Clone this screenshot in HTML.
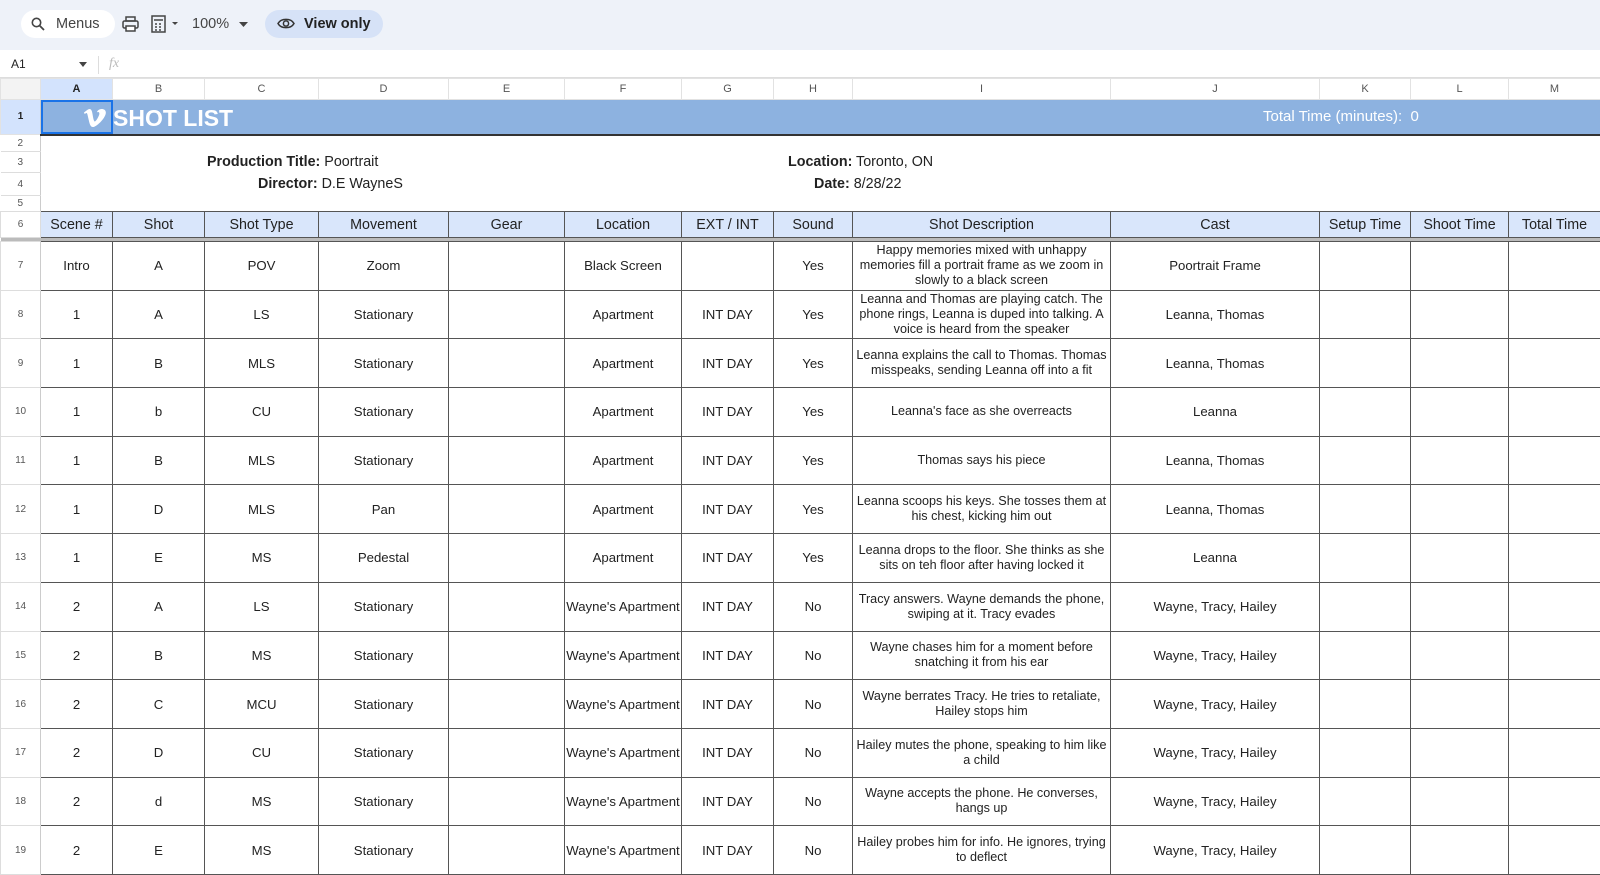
<!DOCTYPE html><html><head><meta charset="utf-8"><style>
body{margin:0;width:1600px;height:875px;overflow:hidden;background:#fff;font-family:"Liberation Sans",Arial,sans-serif;color:#222;position:relative}
.tb{position:absolute;left:0;top:0;width:1600px;height:50px;background:#eef2f9}
.pill{position:absolute;top:10px;height:28px;border-radius:14px;font-size:14.5px;line-height:28px;color:#444}
.fb{position:absolute;top:53px;left:0;width:1600px;height:24px;background:#fff;border-bottom:1px solid #ddd;font-size:12px}
table{position:absolute;left:0;top:78px;border-collapse:collapse;table-layout:fixed;width:1600px}
td{padding:0 1px;text-align:center;font-size:13.2px;overflow:hidden;white-space:nowrap;border:1px solid #e2e2e2}
tr.ch td{height:19.5px;font-size:11px;color:#555;background:#fff}
td.rh{font-size:10px;color:#555;background:#fff;border-right:1px solid #ccc}
tr.ch td:first-child{background:#f3f3f3}
tr.d td{height:47.7px;border:1px solid #555}
tr.d td.rh{border:1px solid #ddd;border-right:1px solid #ccc}
tr.d td.w{white-space:normal;line-height:15px;font-size:12.6px;padding:0 2px}
tr.h td{height:25px;background:#d9e6fb;border:1px solid #555;font-size:14.3px}
tr.h td.rh{background:#fff;border:1px solid #ddd;font-size:10px}
.blank td{border:none}
.blank td.rh{border-bottom:1px solid #ddd;border-right:1px solid #ccc}
b{font-weight:bold}
</style></head><body>
<div class="tb">
<div class="pill" style="left:21px;width:94px;background:#fff"><svg style="position:absolute;left:10px;top:7px" width="14" height="14" viewBox="0 0 14 14"><circle cx="5.5" cy="5.5" r="4.2" fill="none" stroke="#444" stroke-width="1.6"/><path d="M8.5 8.5L13 13" stroke="#444" stroke-width="1.8"/></svg><span style="position:absolute;left:35px">Menus</span></div>
<svg style="position:absolute;left:122px;top:16px" width="17" height="16" viewBox="0 0 17 16"><rect x="4" y="1" width="9" height="4" fill="none" stroke="#444" stroke-width="1.5"/><rect x="1" y="5" width="15" height="7" rx="1.5" fill="none" stroke="#444" stroke-width="1.5"/><rect x="4" y="10" width="9" height="5" fill="#fff" stroke="#444" stroke-width="1.5"/></svg>
<svg style="position:absolute;left:151px;top:15px" width="30" height="18" viewBox="0 0 30 18"><rect x="1" y="1" width="13" height="16" fill="none" stroke="#444" stroke-width="1.5"/><path d="M3 5h9M4 9h2M8 9h2M4 12h2M8 12h2M4 15h2M8 15h2" stroke="#444" stroke-width="1.5"/><path d="M21 7l3 3 3-3z" fill="#444"/></svg>
<span class="pill" style="left:192px">100%</span>
<svg style="position:absolute;left:239px;top:22px" width="9" height="5"><path d="M0 0h9L4.5 5z" fill="#444"/></svg>
<div class="pill" style="left:265px;width:118px;background:#d6e2f7;color:#222;font-weight:bold"><svg style="position:absolute;left:12px;top:7px" width="18" height="13" viewBox="0 0 18 13"><path d="M1 6.5C4 1 14 1 17 6.5 14 12 4 12 1 6.5z" fill="none" stroke="#333" stroke-width="1.5"/><circle cx="9" cy="6.5" r="2.6" fill="none" stroke="#333" stroke-width="1.5"/></svg><span style="position:absolute;left:39px">View only</span></div>
</div>
<div class="fb"><span style="position:absolute;left:11px;top:4px">A1</span><svg style="position:absolute;left:79px;top:9px" width="8" height="5"><path d="M0 0h8L4 5z" fill="#444"/></svg><span style="position:absolute;left:98px;top:3px;height:18px;border-left:1px solid #ddd"></span><span style="position:absolute;left:109px;top:3px;font-style:italic;color:#bbb;font-family:'Liberation Serif',serif;font-size:14px">fx</span></div>
<table>
<colgroup><col style="width:40px"><col style="width:72px"><col style="width:92px"><col style="width:114px"><col style="width:130px"><col style="width:116px"><col style="width:117px"><col style="width:92px"><col style="width:79px"><col style="width:258px"><col style="width:209px"><col style="width:91px"><col style="width:98px"><col style="width:92px"></colgroup>
<tr class="ch"><td></td><td style="background:#d3e3fd;font-weight:bold;color:#222">A</td><td>B</td><td>C</td><td>D</td><td>E</td><td>F</td><td>G</td><td>H</td><td>I</td><td>J</td><td>K</td><td>L</td><td>M</td></tr>
<tr><td class="rh" style="height:34px;background:#d3e3fd;font-weight:bold;color:#222">1</td><td colspan="13" style="background:#8db2e0;border:none;border-bottom:2px solid #333;text-align:left;padding:0;position:relative;height:34px"><div style="position:absolute;left:0;top:0;width:72px;height:34px;border:2px solid #1a73e8;box-sizing:border-box"></div><svg style="position:absolute;left:42px;top:8px" width="24" height="20" viewBox="0 0 24 20"><path d="M1 4.5C3 3 5 1 6.5 1 8.5 1 9 3 9.6 6.5 10.3 11 11 13.5 11.8 13.5 13 13.5 16 8 16.3 6.2 16.6 4 15.5 3.5 14 4.3 14.8 0 23.5-0.5 22.8 5.2 22 11 13 19 10 19 7 19 6.5 15 5.5 11 4.6 7 4.3 5 3.5 5 3 5 2.2 5.7 1.7 6z" fill="#fff"/></svg><span style="position:absolute;left:72px;top:5px;font-size:23px;font-weight:bold;color:#fff">SHOT LIST</span><span style="position:absolute;left:1222px;top:8px;font-size:15px;color:#fff">Total Time (minutes):&nbsp; 0</span></td></tr>
<tr class="blank"><td class="rh" style="height:16px">2</td><td colspan="13"></td></tr>
<tr class="blank"><td class="rh" style="height:20px">3</td><td colspan="13" style="position:relative;text-align:left;font-size:14.3px"><span style="position:absolute;left:166px;top:2px"><b>Production Title:</b> Poortrait</span><span style="position:absolute;left:747px;top:2px"><b>Location:</b> Toronto, ON</span></td></tr>
<tr class="blank"><td class="rh" style="height:22px">4</td><td colspan="13" style="position:relative;text-align:left;font-size:14.3px"><span style="position:absolute;left:217px;top:3px"><b>Director:</b> D.E WayneS</span><span style="position:absolute;left:773px;top:3px"><b>Date:</b> 8/28/22</span></td></tr>
<tr class="blank"><td class="rh" style="height:15px">5</td><td colspan="13"></td></tr>
<tr class="h"><td class="rh">6</td><td>Scene #</td><td>Shot</td><td>Shot Type</td><td>Movement</td><td>Gear</td><td>Location</td><td>EXT / INT</td><td>Sound</td><td>Shot Description</td><td>Cast</td><td>Setup Time</td><td>Shoot Time</td><td>Total Time</td></tr>
<tr><td colspan="14" style="height:3px;padding:0;background:#bbb;border:none"></td></tr>
<tr class="d"><td class="rh">7</td><td>Intro</td><td>A</td><td>POV</td><td>Zoom</td><td></td><td>Black Screen</td><td></td><td>Yes</td><td class="w">Happy memories mixed with unhappy memories fill a portrait frame as we zoom in slowly to a black screen</td><td>Poortrait Frame</td><td></td><td></td><td></td></tr>
<tr class="d"><td class="rh">8</td><td>1</td><td>A</td><td>LS</td><td>Stationary</td><td></td><td>Apartment</td><td>INT DAY</td><td>Yes</td><td class="w">Leanna and Thomas are playing catch. The phone rings, Leanna is duped into talking. A voice is heard from the speaker</td><td>Leanna, Thomas</td><td></td><td></td><td></td></tr>
<tr class="d"><td class="rh">9</td><td>1</td><td>B</td><td>MLS</td><td>Stationary</td><td></td><td>Apartment</td><td>INT DAY</td><td>Yes</td><td class="w">Leanna explains the call to Thomas. Thomas misspeaks, sending Leanna off into a fit</td><td>Leanna, Thomas</td><td></td><td></td><td></td></tr>
<tr class="d"><td class="rh">10</td><td>1</td><td>b</td><td>CU</td><td>Stationary</td><td></td><td>Apartment</td><td>INT DAY</td><td>Yes</td><td class="w">Leanna's face as she overreacts</td><td>Leanna</td><td></td><td></td><td></td></tr>
<tr class="d"><td class="rh">11</td><td>1</td><td>B</td><td>MLS</td><td>Stationary</td><td></td><td>Apartment</td><td>INT DAY</td><td>Yes</td><td class="w">Thomas says his piece</td><td>Leanna, Thomas</td><td></td><td></td><td></td></tr>
<tr class="d"><td class="rh">12</td><td>1</td><td>D</td><td>MLS</td><td>Pan</td><td></td><td>Apartment</td><td>INT DAY</td><td>Yes</td><td class="w">Leanna scoops his keys. She tosses them at his chest, kicking him out</td><td>Leanna, Thomas</td><td></td><td></td><td></td></tr>
<tr class="d"><td class="rh">13</td><td>1</td><td>E</td><td>MS</td><td>Pedestal</td><td></td><td>Apartment</td><td>INT DAY</td><td>Yes</td><td class="w">Leanna drops to the floor. She thinks as she sits on teh floor after having locked it</td><td>Leanna</td><td></td><td></td><td></td></tr>
<tr class="d"><td class="rh">14</td><td>2</td><td>A</td><td>LS</td><td>Stationary</td><td></td><td>Wayne's Apartment</td><td>INT DAY</td><td>No</td><td class="w">Tracy answers. Wayne demands the phone, swiping at it. Tracy evades</td><td>Wayne, Tracy, Hailey</td><td></td><td></td><td></td></tr>
<tr class="d"><td class="rh">15</td><td>2</td><td>B</td><td>MS</td><td>Stationary</td><td></td><td>Wayne's Apartment</td><td>INT DAY</td><td>No</td><td class="w">Wayne chases him for a moment before snatching it from his ear</td><td>Wayne, Tracy, Hailey</td><td></td><td></td><td></td></tr>
<tr class="d"><td class="rh">16</td><td>2</td><td>C</td><td>MCU</td><td>Stationary</td><td></td><td>Wayne's Apartment</td><td>INT DAY</td><td>No</td><td class="w">Wayne berrates Tracy. He tries to retaliate, Hailey stops him</td><td>Wayne, Tracy, Hailey</td><td></td><td></td><td></td></tr>
<tr class="d"><td class="rh">17</td><td>2</td><td>D</td><td>CU</td><td>Stationary</td><td></td><td>Wayne's Apartment</td><td>INT DAY</td><td>No</td><td class="w">Hailey mutes the phone, speaking to him like a child</td><td>Wayne, Tracy, Hailey</td><td></td><td></td><td></td></tr>
<tr class="d"><td class="rh">18</td><td>2</td><td>d</td><td>MS</td><td>Stationary</td><td></td><td>Wayne's Apartment</td><td>INT DAY</td><td>No</td><td class="w">Wayne accepts the phone. He converses, hangs up</td><td>Wayne, Tracy, Hailey</td><td></td><td></td><td></td></tr>
<tr class="d"><td class="rh">19</td><td>2</td><td>E</td><td>MS</td><td>Stationary</td><td></td><td>Wayne's Apartment</td><td>INT DAY</td><td>No</td><td class="w">Hailey probes him for info. He ignores, trying to deflect</td><td>Wayne, Tracy, Hailey</td><td></td><td></td><td></td></tr>
</table>
</body></html>
